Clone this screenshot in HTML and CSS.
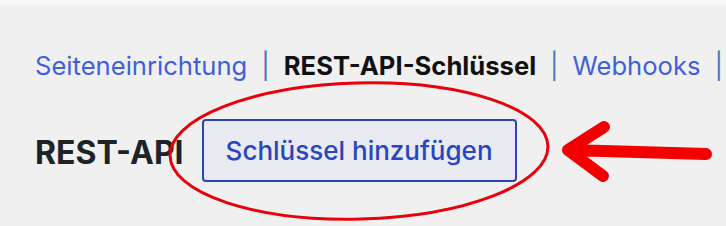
FILE: index.html
```html
<!DOCTYPE html>
<html lang="de">

<head>
    <title>REST-API</title>
    <link rel="stylesheet" href="styles.css">
</head>

<body>

    <div class="wrap">
        <ul class="subnav">
            <li><a href="#">Seiteneinrichtung</a><span class="sep">|</span></li>
            <li><span class="current">REST-API-Schlüssel</span><span class="sep">|</span></li>
            <li><a href="#">Webhooks</a><span class="sep">|</span></li>
        </ul>

        <div class="title-row">
            <h1>REST-API</h1>
            <button class="add-btn">Schlüssel hinzufügen</button>
        </div>
    </div>

    <!-- annotation drawn over the screenshot -->
    <svg class="marks" width="726" height="226" viewBox="0 0 726 226">
        <ellipse cx="359" cy="151" rx="189" ry="68" transform="rotate(-1.5 359 151)"
            fill="none" stroke="#e8000b" stroke-width="3" />
        <path d="M706 154 L569 150 M604 127 L568 150 L603 176" fill="none" stroke="#f20000"
            stroke-width="12" stroke-linecap="round" stroke-linejoin="round" />
    </svg>

</body>

</html>
```

FILE: styles.css
```css
body {
    font-family: Inter, "Liberation Sans", sans-serif;
    background-color: #f0f0f1;
    border-top: 5px solid #f7f7f7;
    margin: 0;
    width: 726px;
    height: 221px;
    overflow: hidden;
    position: relative;
}

.wrap {
    padding-left: 35px;
}

.subnav {
    list-style: none;
    margin: 0;
    padding: 0;
    padding-top: 43px;
    display: flex;
    white-space: nowrap;
    font-size: 25.6px;
    line-height: 36px;
}

.subnav a {
    color: #3f5fdc;
    text-decoration: none;
}

.subnav .current {
    color: #111;
    font-weight: 700;
}

.sep {
    color: #4a78bd;
    font-weight: 400;
    padding: 0 14px;
}

.title-row {
    display: flex;
    align-items: center;
    gap: 18px;
    margin-top: 35px;
}

h1 {
    margin: 0;
    font-size: 32px;
    font-weight: 700;
    color: #1d2327;
    line-height: 40px;
    padding-top: 4px;
}

.add-btn {
    font-family: inherit;
    font-size: 26px;
    font-weight: 500;
    color: #2a45c0;
    background-color: #e9eaf2;
    border: 2px solid #2b44b8;
    border-radius: 4px;
    height: 63px;
    padding: 0 22px;
    cursor: pointer;
}

.marks {
    position: absolute;
    top: -5px;
    left: 0;
    pointer-events: none;
}
```
